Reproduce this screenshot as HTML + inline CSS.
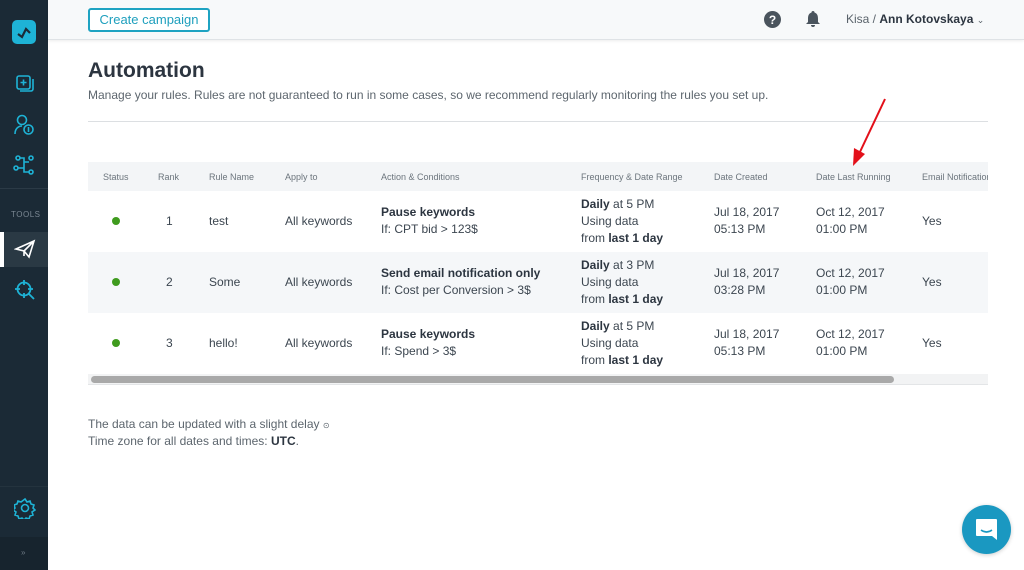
<!DOCTYPE html>
<html><head><meta charset="utf-8"><style>
*{margin:0;padding:0;box-sizing:border-box}
body{width:1024px;height:570px;overflow:hidden;background:#fff;font-family:"Liberation Sans",sans-serif;color:#3c4650;position:relative}
.sb{position:absolute;left:0;top:0;width:48px;height:570px;background:#1b2a36}
.ab{position:absolute}
.hdr{position:absolute;left:48px;top:0;right:0;height:40px;background:#f7f9fa;border-bottom:1px solid #dfe3e6;box-shadow:0 1px 3px rgba(0,0,0,.08)}
.btn{position:absolute;left:88px;top:8px;width:122px;height:24px;border:2px solid #1ea3c2;border-radius:3px;color:#1e9fbd;font-size:13px;text-align:center;line-height:20px;background:#fff}
.t{position:absolute;font-size:12px;color:#3c4650;white-space:nowrap}
.h{position:absolute;font-size:9px;color:#6c757d;white-space:nowrap;top:172px}
b{font-weight:bold;color:#2c3540}
.dot{position:absolute;width:8px;height:8px;border-radius:50%;background:#3f9b1e;left:112px}
</style></head><body>
<div class="sb">
  <div class="ab" style="left:12px;top:20px;width:24px;height:24px;border-radius:5px;background:#1eb3d6"></div>
  <svg class="ab" style="left:12px;top:20px" width="24" height="24"><path d="M6 14 L10 17 L14 9 L18 13" stroke="#1b2a36" stroke-width="2.2" fill="none"/></svg>
  <svg class="ab" style="left:13px;top:72px" width="22" height="22" fill="none" stroke="#1eb3d6" stroke-width="1.6"><rect x="4" y="4" width="13" height="13" rx="2"/><path d="M7 19h11a2 2 0 0 0 2-2V7"/><path d="M10.5 7.5v6M7.5 10.5h6"/></svg>
  <svg class="ab" style="left:13px;top:113px" width="22" height="24" fill="none" stroke="#1eb3d6" stroke-width="1.6"><circle cx="9" cy="7" r="4.5"/><path d="M2 21c0-5 3-8 7-8"/><circle cx="15.5" cy="16.5" r="4.5"/><path d="M15.5 14v5"/></svg>
  <svg class="ab" style="left:13px;top:154px" width="22" height="22" fill="none" stroke="#1eb3d6" stroke-width="1.6"><circle cx="5" cy="4" r="2"/><circle cx="18" cy="4" r="2"/><circle cx="3" cy="14" r="2"/><circle cx="18" cy="18" r="2"/><path d="M7 4h4v14h5M5 14h6M11 8h5"/></svg>
  <div class="ab" style="left:0;top:188px;width:48px;height:1px;background:#2b3a46"></div>
  <div class="ab" style="left:11px;top:210px;font-size:8px;color:#7a8792;letter-spacing:.5px">TOOLS</div>
  <div class="ab" style="left:0;top:232px;width:48px;height:35px;background:#2a3944"></div>
  <div class="ab" style="left:0;top:232px;width:4px;height:35px;background:#fff"></div>
  <svg class="ab" style="left:14px;top:239px" width="22" height="20" fill="none" stroke="#fff" stroke-width="1.6"><path d="M2 10 L20 2 L15 18 L10 12 Z M10 12 L20 2 M10 12 V17"/></svg>
  <svg class="ab" style="left:13px;top:278px" width="24" height="24" fill="none" stroke="#1eb3d6" stroke-width="1.8"><circle cx="11" cy="11" r="6.5"/><path d="M11 2v5M11 15v5M2 11h5M15 11h5M16 16l5 5"/></svg>
  <div class="ab" style="left:0;top:486px;width:48px;height:1px;background:#24333e"></div>
  <svg class="ab" style="left:14px;top:497px" width="22" height="22" fill="none" stroke="#1eb3d6" stroke-width="1.6"><circle cx="11" cy="11" r="3.5"/><path d="M11 2l2 3 3-1 1 3 3 1-1 3 2 2-3 2 1 3-3 1-1 3-3-1-2 2-2-2-3 1-1-3-3-1 1-3-3-2 2-2-1-3 3-1 1-3 3 1z"/></svg>
  <div class="ab" style="left:0;top:537px;width:48px;height:33px;background:#17242e"></div>
  <div class="ab" style="left:21px;top:548px;font-size:8px;color:#6c7883">»</div>
</div>
<div class="hdr"></div>
<div class="btn">Create campaign</div>
<svg class="ab" style="left:764px;top:11px" width="17" height="17"><circle cx="8.5" cy="8.5" r="8.5" fill="#4a545d"/><text x="8.5" y="13" font-size="12" font-weight="bold" fill="#fff" text-anchor="middle" font-family="Liberation Sans">?</text></svg>
<svg class="ab" style="left:805px;top:10px" width="16" height="18"><path d="M8 1a1.5 1.5 0 0 1 1.5 1.5C12.5 3.5 13 6 13 9v3l2 2H1l2-2V9c0-3 .5-5.5 3.5-6.5A1.5 1.5 0 0 1 8 1zM6 15h4a2 2 0 0 1-4 0z" fill="#4a545d"/></svg>
<div class="t" style="left:846px;top:12px;font-size:12px;color:#5a636b">Kisa / <b>Ann Kotovskaya</b> <span style="font-size:9px">⌄</span></div>

<div class="t" style="left:88px;top:59px;font-size:21px;font-weight:bold;color:#2c3540">Automation</div>
<div class="t" style="left:88px;top:88px;font-size:12px;color:#5d666e">Manage your rules. Rules are not guaranteed to run in some cases, so we recommend regularly monitoring the rules you set up.</div>
<div class="ab" style="left:88px;top:121px;width:900px;height:1px;background:#dcdfe2"></div>

<div class="ab" style="left:88px;top:162px;width:900px;height:29px;background:#f3f5f7"></div>
<div class="ab" style="left:88px;top:252px;width:900px;height:61px;background:#f5f7f9"></div>
<div class="ab" style="left:88px;top:374px;width:900px;height:11px;background:#f2f3f4;border-bottom:1px solid #e3e5e7"></div>
<div class="ab" style="left:91px;top:376px;width:803px;height:7px;border-radius:4px;background:#a9a9a9"></div>
<div class="h" style="left:103px">Status</div><div class="h" style="left:158px">Rank</div><div class="h" style="left:209px">Rule Name</div><div class="h" style="left:285px">Apply to</div><div class="h" style="left:381px">Action &amp; Conditions</div><div class="h" style="left:581px">Frequency &amp; Date Range</div><div class="h" style="left:714px">Date Created</div><div class="h" style="left:816px">Date Last Running</div><div class="h" style="left:922px;width:66px;overflow:hidden">Email Notifications</div>

<div class="dot" style="top:217px"></div><div class="t" style="left:166px;top:214px">1</div><div class="t" style="left:209px;top:214px">test</div><div class="t" style="left:285px;top:214px">All keywords</div>
<div class="t" style="left:381px;top:205px"><b>Pause keywords</b></div><div class="t" style="left:381px;top:222px">If: CPT bid &gt; 123$</div>
<div class="t" style="left:581px;top:197px"><b>Daily</b> at 5 PM</div><div class="t" style="left:581px;top:214px">Using data</div><div class="t" style="left:581px;top:231px">from <b>last 1 day</b></div>
<div class="t" style="left:714px;top:205px">Jul 18, 2017</div><div class="t" style="left:714px;top:222px">05:13 PM</div>
<div class="t" style="left:816px;top:205px">Oct 12, 2017</div><div class="t" style="left:816px;top:222px">01:00 PM</div><div class="t" style="left:922px;top:214px">Yes</div>

<div class="dot" style="top:278px"></div><div class="t" style="left:166px;top:275px">2</div><div class="t" style="left:209px;top:275px">Some</div><div class="t" style="left:285px;top:275px">All keywords</div>
<div class="t" style="left:381px;top:266px"><b>Send email notification only</b></div><div class="t" style="left:381px;top:283px">If: Cost per Conversion &gt; 3$</div>
<div class="t" style="left:581px;top:258px"><b>Daily</b> at 3 PM</div><div class="t" style="left:581px;top:275px">Using data</div><div class="t" style="left:581px;top:292px">from <b>last 1 day</b></div>
<div class="t" style="left:714px;top:266px">Jul 18, 2017</div><div class="t" style="left:714px;top:283px">03:28 PM</div>
<div class="t" style="left:816px;top:266px">Oct 12, 2017</div><div class="t" style="left:816px;top:283px">01:00 PM</div><div class="t" style="left:922px;top:275px">Yes</div>

<div class="dot" style="top:339px"></div><div class="t" style="left:166px;top:336px">3</div><div class="t" style="left:209px;top:336px">hello!</div><div class="t" style="left:285px;top:336px">All keywords</div>
<div class="t" style="left:381px;top:327px"><b>Pause keywords</b></div><div class="t" style="left:381px;top:344px">If: Spend &gt; 3$</div>
<div class="t" style="left:581px;top:319px"><b>Daily</b> at 5 PM</div><div class="t" style="left:581px;top:336px">Using data</div><div class="t" style="left:581px;top:353px">from <b>last 1 day</b></div>
<div class="t" style="left:714px;top:327px">Jul 18, 2017</div><div class="t" style="left:714px;top:344px">05:13 PM</div>
<div class="t" style="left:816px;top:327px">Oct 12, 2017</div><div class="t" style="left:816px;top:344px">01:00 PM</div><div class="t" style="left:922px;top:336px">Yes</div>

<svg class="ab" style="left:845px;top:96px" width="45" height="72"><path d="M40 3 L14 58" stroke="#e3101a" stroke-width="2"/><path d="M8 70 L9 52 L20 58 Z" fill="#e3101a"/></svg>

<div class="t" style="left:88px;top:417px;color:#5d666e">The data can be updated with a slight delay <span style="font-size:8px">⊙</span></div>
<div class="t" style="left:88px;top:434px;color:#5d666e">Time zone for all dates and times: <b>UTC</b>.</div>

<div class="ab" style="left:962px;top:505px;width:49px;height:49px;border-radius:50%;background:#1a98c1;box-shadow:0 1px 4px rgba(0,0,0,.2)"></div>
<svg class="ab" style="left:974px;top:517px" width="25" height="25"><path d="M3 2h19a1 1 0 0 1 1 1v20l-5-4H3a1 1 0 0 1-1-1V3a1 1 0 0 1 1-1z" fill="#fff"/><path d="M7 13q5.5 4 11 0" stroke="#1a98c1" stroke-width="1.6" fill="none"/></svg>
</body></html>
